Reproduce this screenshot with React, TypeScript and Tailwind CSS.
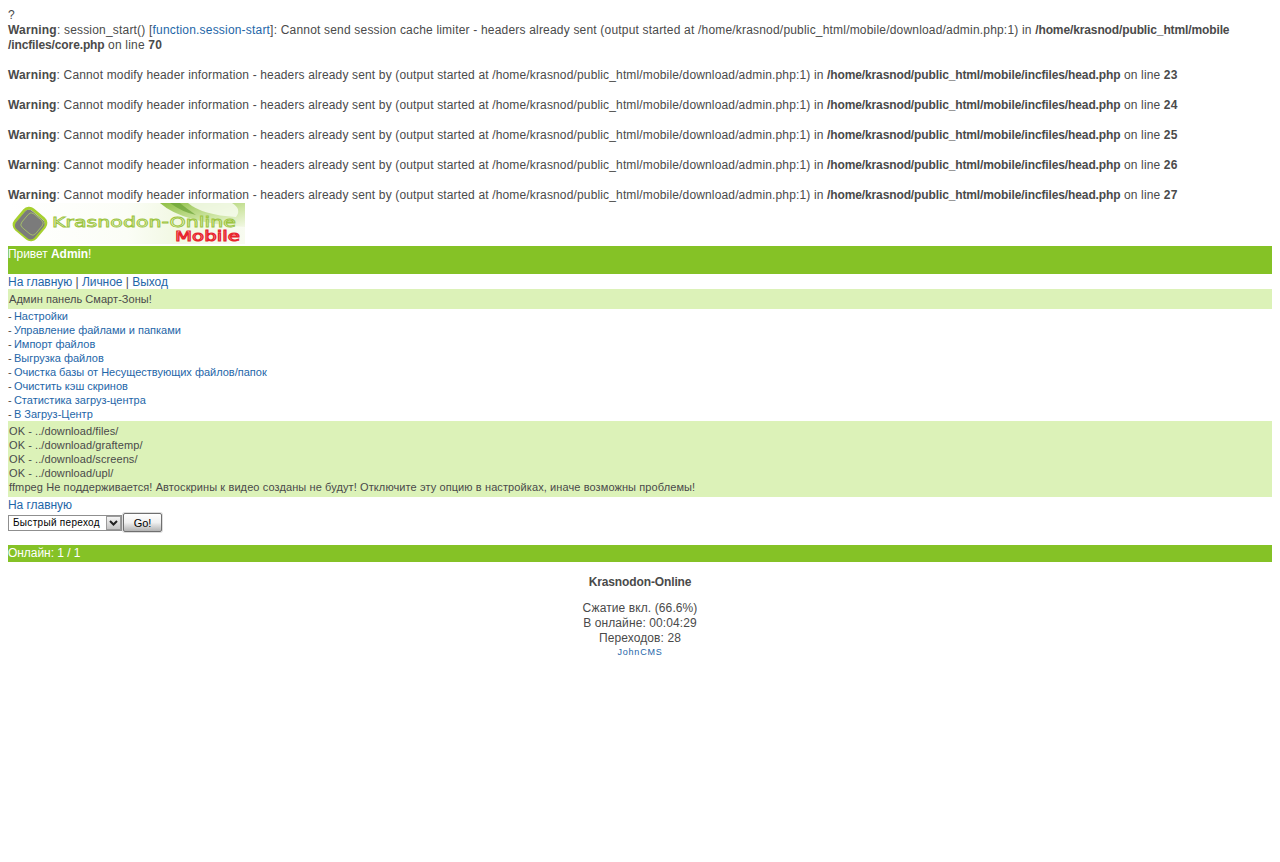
import React from "react";

const A = ({ children, className = "" }: { children: React.ReactNode; className?: string }) => (
  <a href="#" className={`text-[#1e66a8] ${className}`}>{children}</a>
);

const B = ({ children }: { children: React.ReactNode }) => (
  <b className="tracking-[-0.12px]">{children}</b>
);

const Warn = ({ file, line }: { file: string; line: number }) => (
  <div className="h-[30px] last:h-[15px] tracking-[0.15px]">
    <b>Warning</b>: Cannot modify header information - headers already sent by (output started at /home/krasnod/public_html/mobile/download/admin.php:1) in <B>/home/krasnod/public_html/mobile/incfiles/{file}</B> on line <b>{line}</b>
  </div>
);

const links = [
  "Настройки",
  "Управление файлами и папками",
  "Импорт файлов",
  "Выгрузка файлов",
  "Очистка базы от Несуществующих файлов/папок",
  "Очистить кэш скринов",
  "Статистика загруз-центра",
  "В Загруз-Центр",
];

export default function App() {
  return (
    <div className="min-h-[862px] bg-white px-2 pt-2 font-['Liberation_Sans',Arial,sans-serif] text-[12px] leading-[15px] text-[#4a4a4a]">
      <div>?</div>
      <div className="h-[45px] tracking-[0.19px]">
        <b>Warning</b>: session_start() [<A>function.session-start</A>]: Cannot send session cache limiter - headers already sent (output started at /home/krasnod/public_html/mobile/download/admin.php:1) in <B>/home/krasnod/public_html/mobile<br />/incfiles/core.php</B> on line <b>70</b>
      </div>
      <div>
        {[23, 24, 25, 26, 27].map((n) => (
          <Warn key={n} file="head.php" line={n} />
        ))}
      </div>

      <div className="ml-[2px] h-[41px] w-[235px]">
        <svg width="235" height="41" viewBox="0 0 235 41" className="block">
          <defs>
            <linearGradient id="bg" x1="0" x2="1" y1="0" y2="0">
              <stop offset="0" stopColor="#ffffff" />
              <stop offset="0.5" stopColor="#fbfdf6" />
              <stop offset="0.72" stopColor="#f1f8e2" />
              <stop offset="1" stopColor="#f8fbf0" />
            </linearGradient>
            <linearGradient id="sw" x1="0" x2="1" y1="0" y2="1">
              <stop offset="0" stopColor="#8fbf45" />
              <stop offset="0.6" stopColor="#cfe6a5" />
              <stop offset="1" stopColor="#f2f8e4" />
            </linearGradient>
          </defs>
          <rect width="235" height="41" fill="url(#bg)" />
          <path d="M150 0 Q172 20 235 24 L235 0 Z" fill="url(#sw)" />
          <path d="M178 0 Q192 12 226 14 Q232 6 222 0 Z" fill="#f7fbee" opacity="0.85" />
          <path d="M160 0 Q172 9 186 12 Q172 2 170 0 Z" fill="#5f9a2c" opacity="0.6" />
          <rect x="7" y="8" width="26" height="26" rx="6" fill="#ffffff" stroke="#a6d02f" strokeWidth="3" transform="rotate(40 20 21)" />
          <rect x="8" y="9" width="24" height="24" rx="5" fill="#7b7b7b" transform="rotate(40 19 21)" />
          <rect x="13" y="12" width="18" height="18" rx="4" fill="none" stroke="#a9c765" strokeWidth="0.8" transform="rotate(40 22 21)" />
          <text x="42" y="24" fontSize="14" fontFamily="'DejaVu Sans',sans-serif" fill="#f2f9df" stroke="#9cc43e" strokeWidth="0.8" textLength="184" lengthAdjust="spacingAndGlyphs">Krasnodon-Online</text>
          <text x="165" y="37.5" fontSize="14" fontFamily="'DejaVu Sans',sans-serif" fill="#fbe9e9" stroke="#e8232b" strokeWidth="1" textLength="65" lengthAdjust="spacingAndGlyphs">Mobile</text>
        </svg>
      </div>

      <div className="mt-[2px] h-[28px] bg-[#85c226] pt-[1px] text-white tracking-[-0.05px]">
        Привет <b>Admin</b>!
      </div>
      <div className="h-[15px] pt-[1px] tracking-[-0.03px]">
        <A>На главную</A> | <A>Личное</A> | <A>Выход</A>
      </div>
      <div className="h-[20px] bg-[#dcf2b8] px-[1px] pt-[3px] text-[11px] leading-[14px] tracking-[0.05px]">
        Админ панель Смарт-Зоны!
      </div>
      <div className="text-[11px] leading-[14px]">
        {links.map((l) => (
          <div key={l}>
            <span className="tracking-[-0.4px]">- </span><A>{l}</A>
          </div>
        ))}
      </div>
      <div className="h-[76px] bg-[#dcf2b8] px-[1px] pt-[3px] text-[11px] leading-[14px] tracking-[0.08px]">
        <div>OK - ../download/files/</div>
        <div>OK - ../download/graftemp/</div>
        <div>OK - ../download/screens/</div>
        <div>OK - ../download/upl/</div>
        <div className="tracking-[0.1px]">ffmpeg Не поддерживается! Автоскрины к видео созданы не будут! Отключите эту опцию в настройках, иначе возможны проблемы!</div>
      </div>
      <div className="h-[16px] pt-[1px] tracking-[-0.05px]">
        <A>На главную</A>
      </div>
      <div className="flex h-[32px] items-start">
        <div className="relative mt-[2px] h-[16px] w-[114px]">
          <select className="block h-[16px] w-full appearance-none border border-[#8f8f8f] bg-white pl-[4px] font-['Liberation_Sans',Arial,sans-serif] text-[10px] leading-[14px] tracking-[0.3px] text-black">
            <option>Быстрый переход</option>
          </select>
          <span className="pointer-events-none absolute right-[1px] top-[1px] flex h-[14px] w-[15px] items-center justify-center border border-[#9a9a9a] bg-gradient-to-b from-[#f4f4f4] to-[#c4c4c4]">
            <svg width="9" height="6" viewBox="0 0 9 6"><path d="M1 1 L4.5 4.5 L8 1" fill="none" stroke="#222222" strokeWidth="2" /></svg>
          </span>
        </div>
        <button className="ml-[1px] h-[19px] w-[39px] rounded-[2px] border border-[#6f6f6f] bg-gradient-to-b from-[#ffffff] via-[#f0f0f0] to-[#b4b4b4] font-['Liberation_Sans',Arial,sans-serif] text-[11px] leading-[16px] text-black shadow-[0_0_0_1px_#dddddd]">
          Go!
        </button>
      </div>
      <div className="h-[17px] bg-[#85c226] pt-[1px] text-white tracking-[-0.05px]">Онлайн: 1 / 1</div>
      <div className="pt-[12px] text-center">
        <div className="h-[27px] pt-[1px]"><B>Krasnodon-Online</B></div>
        <div className="tracking-[0.1px]">Сжатие вкл. (66.6%)</div>
        <div className="tracking-[0.1px]">В онлайне: 00:04:29</div>
        <div className="tracking-[0.1px]">Переходов: 28</div>
        <div className="text-[9px] leading-[12px] tracking-[0.8px]"><A>JohnCMS</A></div>
      </div>
    </div>
  );
}
